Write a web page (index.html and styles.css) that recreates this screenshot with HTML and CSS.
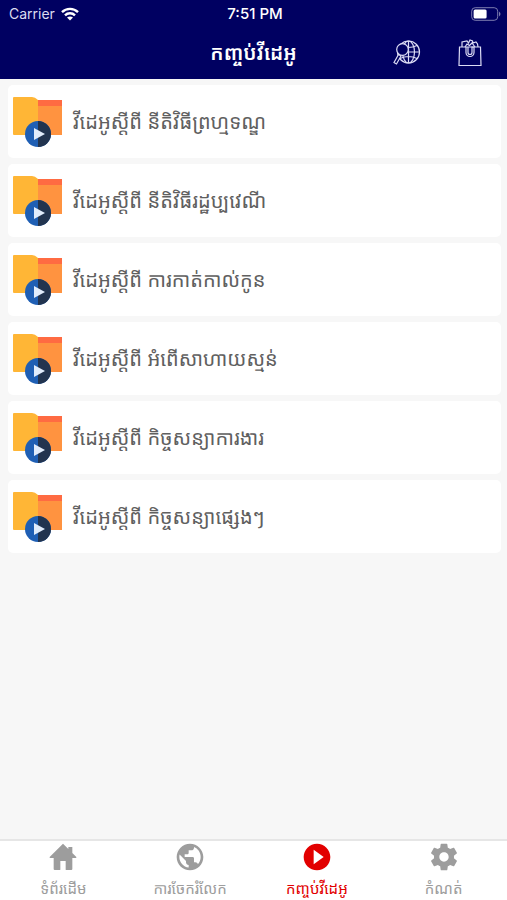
FILE: index.html
```html
<!DOCTYPE html>
<html lang="km">
<head>
  <meta charset="UTF-8">
  <meta name="viewport" content="width=device-width, initial-scale=1.0">
  <title>កញ្ចប់វីដេអូ</title>
  <link rel="stylesheet" href="styles.css">
</head>

<body>
  <svg class="sprite" aria-hidden="true">
    <symbol id="video-folder" viewBox="0 0 50 50">
      <path fill="#ff9340" d="M24 3h25v35H24z"/>
      <path fill="#ff6b42" d="M24 3h25v6H24z"/>
      <path fill="#ffb636" d="M1 0h18q3 0 6 3v35H1q-1 0-1-1V1q0-1 1-1z"/>
      <circle cx="25" cy="37" r="13" fill="#1f5fb4"/>
      <path fill="#22344f" d="M25 24a13 13 0 0 1 0 26z"/>
      <path fill="#e1ecfb" d="M21 31v12l11-6z"/>
    </symbol>
  </svg>

  <header class="header">
    <div class="status-bar">
      <div class="carrier">
        <span>Carrier</span>
        <svg width="18" height="14" viewBox="0 0 18 14" fill="none" stroke="#fff" stroke-width="2.4">
          <path d="M1 5.2a11.3 11.3 0 0 1 16 0"/>
          <path d="M4 8.4a7 7 0 0 1 10 0"/>
          <path fill="#fff" stroke="none" d="M9 13.6l-3-3q3-2.4 6 0z"/>
        </svg>
      </div>
      <span class="time">7:51 PM</span>
      <div class="battery">
        <svg width="30" height="14" viewBox="0 0 30 14">
          <rect x=".7" y=".7" width="26" height="12.6" rx="3.5" fill="none" stroke="#7c7caf"/>
          <rect x="2.6" y="2.6" width="13" height="8.8" rx="1.5" fill="#fff"/>
          <path fill="#7c7caf" d="M28 4.5q3 2.5 0 5z"/>
        </svg>
      </div>
    </div>
    <div class="title-bar">
      <h1>កញ្ចប់វីដេអូ</h1>
      <div class="actions">
        <button type="button" aria-label="ស្វែងរក">
          <svg width="28" height="28" viewBox="0 0 28 28" fill="none" stroke="#dcdcf5" stroke-width="1.2">
            <circle cx="15.500" cy="13" r="11"/>
            <ellipse cx="15.500" cy="13" rx="6" ry="11"/>
            <path d="M15.500 2v22M4.500 13h22M7 6.500q8.500 4 17 0M7 19.500q8.500-4 17 0"/>
            <circle cx="9.500" cy="10.500" r="5.800" fill="#000061"/>
            <path fill="#000061" d="M5.500 15.500L1 23.500l2.500 1.500L8 17z"/>
          </svg>
        </button>
        <button type="button" aria-label="កន្ត្រក">
          <svg width="24" height="28" viewBox="0 0 24 28" fill="none" stroke="#dcdcf5" stroke-width="1.2">
            <path d="M1.500 8h21l.5 18.500H1z"/>
            <path d="M4 8V3l5-1 1.500 2L12 1l2.500 1 .5 2 3-1 1.500 2 .5 3M7 8l2-3 2.500 1.500L14 4l3 4"/>
            <path d="M8 8v5.500a4 4 0 0 0 8 0V8h-2v5.500a2 2 0 0 1-4 0V8"/>
          </svg>
        </button>
      </div>
    </div>
  </header>

  <main class="list">
    <a class="card" href="#">
      <svg class="folder"><use href="#video-folder"/></svg>
      <span>វីដេអូស្តីពី នីតិវិធីព្រហ្មទណ្ឌ</span>
    </a>
    <a class="card" href="#">
      <svg class="folder"><use href="#video-folder"/></svg>
      <span>វីដេអូស្តីពី នីតិវិធីរដ្ឋប្បវេណី</span>
    </a>
    <a class="card" href="#">
      <svg class="folder"><use href="#video-folder"/></svg>
      <span>វីដេអូស្តីពី ការកាត់កាល់កូន</span>
    </a>
    <a class="card" href="#">
      <svg class="folder"><use href="#video-folder"/></svg>
      <span>វីដេអូស្តីពី អំពើសាហាយស្មន់</span>
    </a>
    <a class="card" href="#">
      <svg class="folder"><use href="#video-folder"/></svg>
      <span>វីដេអូស្តីពី កិច្ចសន្យាការងារ</span>
    </a>
    <a class="card" href="#">
      <svg class="folder"><use href="#video-folder"/></svg>
      <span>វីដេអូស្តីពី កិច្ចសន្យាផ្សេងៗ</span>
    </a>
  </main>

  <nav class="tabs">
    <a href="#">
      <svg viewBox="0 0 24 24"><path d="M12 2L2 12q-.3.800.5.800H5V21q0 .8.800.8H9.500q.5 0 .5-.5V15h4v6.300q0 .5.500.5h3.700q.8 0 .8-.8v-8.200h2.500q.8 0 .5-.8L19 9V4.500h-3V6z"/></svg>
      <span>ទំព័រដើម</span>
    </a>
    <a href="#">
      <svg viewBox="0 0 24 24"><path d="M12 2C6.480 2 2 6.480 2 12s4.480 10 10 10 10-4.480 10-10S17.520 2 12 2zm-1 17.930c-3.950-.490-7-3.850-7-7.930 0-.620.080-1.210.210-1.790L9 15v1c0 1.100.9 2 2 2v1.930zm6.900-2.540c-.260-.810-1-1.390-1.900-1.390h-1v-3c0-.550-.450-1-1-1H8v-2h2c.550 0 1-.450 1-1V7h2c1.100 0 2-.9 2-2v-.410c2.930 1.190 5 4.060 5 7.410 0 2.080-.8 3.970-2.100 5.390z"/></svg>
      <span>ការចែករំលែក</span>
    </a>
    <a class="active" href="#" aria-current="page">
      <svg viewBox="0 0 24 24"><path d="M12 2C6.480 2 2 6.480 2 12s4.480 10 10 10 10-4.480 10-10S17.520 2 12 2zm-2.500 15.500v-11l7.500 5.500-7.500 5.500z"/></svg>
      <span>កញ្ចប់វីដេអូ</span>
    </a>
    <a href="#">
      <svg viewBox="0 0 24 24"><path d="M19.430 12.980c.040-.320.070-.640.070-.980s-.030-.660-.070-.980l2.110-1.650c.190-.150.240-.420.120-.640l-2-3.460c-.120-.220-.390-.3-.610-.220l-2.490 1c-.520-.4-1.080-.730-1.690-.980l-.380-2.650C14.460 2.180 14.250 2 14 2h-4c-.250 0-.460.180-.490.420l-.380 2.650c-.610.250-1.170.590-1.690.980l-2.490-1c-.230-.090-.490 0-.610.220l-2 3.460c-.130.220-.070.490.120.640l2.110 1.650c-.040.320-.070.650-.070.980s.030.660.070.980l-2.110 1.650c-.190.150-.240.420-.120.640l2 3.460c.120.220.390.3.610.220l2.490-1c.520.4 1.080.730 1.690.980l.380 2.650c.030.240.240.420.490.420h4c.250 0 .460-.180.490-.420l.380-2.650c.610-.250 1.170-.590 1.690-.980l2.490 1c.230.090.490 0 .610-.220l2-3.460c.120-.220.070-.490-.120-.640l-2.110-1.650zM12 15.500c-1.930 0-3.500-1.570-3.500-3.500s1.570-3.500 3.500-3.500 3.500 1.570 3.500 3.500-1.570 3.500-3.500 3.500z"/></svg>
      <span>កំណត់</span>
    </a>
  </nav>
</body>
</html>
```

FILE: styles.css
```css
:root {
  --navy: #000061;
  --red: #e20000;
  --gray: #9d9d9d;
  --text: #606060;
}

* {
  box-sizing: border-box;
  margin: 0;
  padding: 0;
}

body {
  font-family: Inter, "Noto Sans Khmer", "Khmer OS", sans-serif;
  min-height: 100vh;
  display: flex;
  flex-direction: column;
  background: #f7f7f7;
  color: var(--text);
}

svg {
  display: block;
  flex: none;
}

a {
  color: inherit;
  text-decoration: none;
}

.sprite {
  width: 0;
  height: 0;
  position: absolute;
}

.header {
  background: var(--navy);
  color: white;
}

.status-bar,
.title-bar {
  display: grid;
  grid-template-columns: 1fr auto 1fr;
  align-items: center;
}

.status-bar {
  height: 27px;
  padding: 0 6px 0 9px;
  font-size: 14px;
}

.carrier {
  display: flex;
  align-items: center;
  gap: 6px;
  color: #dcdcf0;
}

.time {
  font-size: 15px;
  font-weight: 500;
}

.battery {
  justify-self: end;
}

.title-bar {
  height: 52px;
  padding: 0 25px;
}

h1 {
  grid-column: 2;
  font-size: 20px;
  font-weight: 600;
  line-height: 32px;
}

.actions {
  justify-self: end;
  display: flex;
  gap: 37px;
}

button {
  background: none;
  border: none;
  cursor: pointer;
}

.list {
  flex: 1;
  display: flex;
  flex-direction: column;
  gap: 6px;
  padding: 6px 6px 6px 8px;
}

.card {
  display: flex;
  align-items: center;
  gap: 10px;
  height: 73px;
  padding: 0 5px;
  background: white;
  border-radius: 5px;
  font-size: 20px;
  line-height: 32px;
}

.folder {
  width: 50px;
  height: 50px;
}

.tabs {
  display: grid;
  grid-template-columns: repeat(4, 1fr);
  height: 61px;
  background: white;
  border-top: 2px solid #e6e6e6;
}

.tabs a {
  display: flex;
  flex-direction: column;
  align-items: center;
  gap: 4px;
  color: var(--gray);
  font-size: 15px;
  line-height: 24px;
  white-space: nowrap;
}

.tabs svg {
  width: 32px;
  height: 32px;
  fill: currentColor;
}

.tabs .active {
  color: var(--red);
}
```
